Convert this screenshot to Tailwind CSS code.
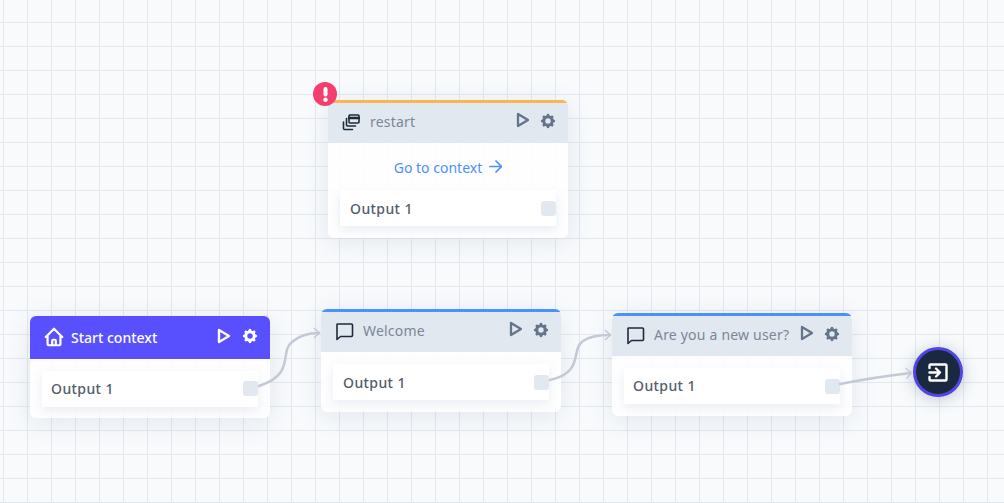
<!DOCTYPE html>
<html lang="en">
<head>
  <meta charset="UTF-8" />
  <title>Flow editor</title>
  <script src="https://cdn.jsdelivr.net/npm/@tailwindcss/browser@4"></script>
</head>
<body class="m-0 overflow-hidden">
  <!-- canvas: nodes sit on a free canvas so they are placed absolutely -->
  <div class="relative w-[1004px] h-[503px] overflow-hidden bg-[#f8fafc] bg-[image:linear-gradient(#e2e8f0_1px,transparent_1px),linear-gradient(90deg,#e2e8f0_1px,transparent_1px)] bg-[size:24px_24px] bg-[position:3px_22px] font-['Noto_Sans','Open_Sans',sans-serif]">

    <!-- restart -->
    <div class="absolute left-[328px] top-[100px] w-[240px] h-[138px] rounded-md bg-white/85 shadow-[0_4px_24px_rgba(100,116,139,0.14)] overflow-hidden">
      <div class="h-[43px] border-t-[3px] border-[#fbb64f] bg-[#e2e8f0] flex items-center pl-[14px] pr-[11px] pb-[4px]">
        <svg class="mt-[2px] w-[18px] h-[18px] text-[#1e293b]" viewBox="0 0 18 18" fill="none" stroke="currentColor" stroke-width="1.600" stroke-linecap="round" stroke-linejoin="round"><rect x="7" y="2" width="10" height="8" rx="1"/><path d="M7 5h10" stroke-width="2.400"/><path d="M4.500 5.500v6.500a1 1 0 001 1h8"/><path d="M1.500 9v6.500a1 1 0 001 1h8"/></svg>
        <span class="ml-[10px] mt-[1px] text-[14px] tracking-[0.2px] text-[#7b8798]">restart</span>
        <svg class="ml-auto mb-[2px] w-[12px] h-[14px] overflow-visible text-[#64748b]" viewBox="0 0 12 14" fill="none" stroke="currentColor" stroke-width="2.300" stroke-linejoin="round"><path d="M1 1l10 6-10 6z"/></svg>
        <svg class="ml-[10px] w-[18px] h-[18px] text-[#64748b]" viewBox="0 0 20 20" fill="currentColor"><path fill-rule="evenodd" clip-rule="evenodd" d="M11.49 3.17c-.38-1.56-2.6-1.56-2.98 0a1.532 1.532 0 01-2.286.948c-1.372-.836-2.942.734-2.106 2.106.54.886.061 2.042-.947 2.287-1.561.379-1.561 2.6 0 2.978a1.532 1.532 0 01.947 2.287c-.836 1.372.734 2.942 2.106 2.106a1.532 1.532 0 012.287.947c.379 1.561 2.6 1.561 2.978 0a1.533 1.533 0 012.287-.947c1.372.836 2.942-.734 2.106-2.106a1.533 1.533 0 01.947-2.287c1.561-.379 1.561-2.6 0-2.978a1.532 1.532 0 01-.947-2.287c.836-1.372-.734-2.942-2.106-2.106a1.532 1.532 0 01-2.287-.947zM10 13a3 3 0 100-6 3 3 0 000 6z"/></svg>
      </div>
      <div class="h-[47px] pt-[2px] flex items-center justify-center gap-[7px] text-[14px] text-[#4a90ff]">
        <span>Go to context</span>
        <svg class="mb-[3px] w-[13px] h-[13px]" viewBox="0 0 13 13" fill="none" stroke="currentColor" stroke-width="1.700" stroke-linecap="round" stroke-linejoin="round"><path d="M1 6.500h11M7 1l5.500 5.500L7 12"/></svg>
      </div>
      <div class="mx-[12px] h-[36px] bg-white shadow-[0_4px_10px_rgba(100,116,139,0.12)] flex items-center justify-between pl-[10px]">
        <span class="text-[14px] font-medium tracking-[0.4px] text-[#525c6b]">Output 1</span>
        <span class="w-[15px] h-[15px] rounded-[3px] bg-[#e2e8f0]"></span>
      </div>
    </div>
    <div class="absolute left-[313px] top-[82px] w-[24px] h-[24px] rounded-full bg-[#f43f6e] text-white flex items-center justify-center">
      <svg class="w-[5px] h-[15px]" viewBox="0 0 5 15" fill="currentColor"><rect x="0.500" y="0" width="4" height="9.500" rx="2"/><circle cx="2.500" cy="12.800" r="2.200"/></svg>
    </div>

    <!-- Start context -->
    <div class="absolute left-[30px] top-[316px] w-[240px] h-[102px] rounded-md bg-white/85 shadow-[0_4px_24px_rgba(100,116,139,0.14)] overflow-hidden">
      <div class="h-[43px] bg-[#5850ff] flex items-center pl-[13px] pr-[11px] pb-[3px]">
        <svg class="mt-[2px] w-[22px] h-[22px] text-white" viewBox="0 0 24 24" fill="none" stroke="currentColor" stroke-width="2.400" stroke-linecap="round" stroke-linejoin="round"><path d="M3 12l2-2m0 0l7-7 7 7M5 10v10a1 1 0 001 1h3m10-11l2 2m-2-2v10a1 1 0 01-1 1h-3m-6 0a1 1 0 001-1v-4a1 1 0 011-1h2a1 1 0 011 1v4a1 1 0 001 1m-6 0h6"/></svg>
        <span class="ml-[6px] mt-[3px] text-[14px] font-medium text-white">Start context</span>
        <svg class="ml-auto w-[12px] h-[14px] overflow-visible text-white" viewBox="0 0 12 14" fill="none" stroke="currentColor" stroke-width="2.400" stroke-linejoin="round"><path d="M1 1l10 6-10 6z"/></svg>
        <svg class="ml-[11px] w-[18px] h-[18px] text-white" viewBox="0 0 20 20" fill="currentColor"><path fill-rule="evenodd" clip-rule="evenodd" d="M11.49 3.17c-.38-1.56-2.6-1.56-2.98 0a1.532 1.532 0 01-2.286.948c-1.372-.836-2.942.734-2.106 2.106.54.886.061 2.042-.947 2.287-1.561.379-1.561 2.6 0 2.978a1.532 1.532 0 01.947 2.287c-.836 1.372.734 2.942 2.106 2.106a1.532 1.532 0 012.287.947c.379 1.561 2.6 1.561 2.978 0a1.533 1.533 0 012.287-.947c1.372.836 2.942-.734 2.106-2.106a1.533 1.533 0 01.947-2.287c1.561-.379 1.561-2.6 0-2.978a1.532 1.532 0 01-.947-2.287c.836-1.372-.734-2.942-2.106-2.106a1.532 1.532 0 01-2.287-.947zM10 13a3 3 0 100-6 3 3 0 000 6z"/></svg>
      </div>
      <div class="mt-[12px] mx-[12px] h-[36px] pb-[2px] bg-white shadow-[0_4px_10px_rgba(100,116,139,0.12)] flex items-center justify-between pl-[9px]">
        <span class="text-[14px] font-medium tracking-[0.4px] text-[#525c6b]">Output 1</span>
        <span class="w-[15px] h-[15px] rounded-[3px] bg-[#e2e8f0]"></span>
      </div>
    </div>

    <!-- Welcome -->
    <div class="absolute left-[321px] top-[309px] w-[240px] h-[103px] rounded-md bg-white/85 shadow-[0_4px_24px_rgba(100,116,139,0.14)] overflow-hidden">
      <div class="h-[43px] border-t-[3px] border-[#4a90ff] bg-[#e2e8f0] flex items-center pl-[14px] pr-[11px] pb-[4px]">
        <svg class="mt-[2px] w-[19px] h-[19px] text-[#1e293b]" viewBox="0 0 19 19" fill="none" stroke="currentColor" stroke-width="1.600" stroke-linejoin="round"><path d="M2.500 2h14a1 1 0 011 1v10.500a1 1 0 01-1 1H5.500l-3.500 3V2.500a.5.5 0 01.5-.5z"/></svg>
        <span class="ml-[9px] text-[14px] tracking-[0.2px] text-[#7b8798]">Welcome</span>
        <svg class="ml-auto mb-[2px] w-[12px] h-[14px] overflow-visible text-[#64748b]" viewBox="0 0 12 14" fill="none" stroke="currentColor" stroke-width="2.300" stroke-linejoin="round"><path d="M1 1l10 6-10 6z"/></svg>
        <svg class="ml-[10px] w-[18px] h-[18px] text-[#64748b]" viewBox="0 0 20 20" fill="currentColor"><path fill-rule="evenodd" clip-rule="evenodd" d="M11.49 3.17c-.38-1.56-2.6-1.56-2.98 0a1.532 1.532 0 01-2.286.948c-1.372-.836-2.942.734-2.106 2.106.54.886.061 2.042-.947 2.287-1.561.379-1.561 2.6 0 2.978a1.532 1.532 0 01.947 2.287c-.836 1.372.734 2.942 2.106 2.106a1.532 1.532 0 012.287.947c.379 1.561 2.6 1.561 2.978 0a1.533 1.533 0 012.287-.947c1.372.836 2.942-.734 2.106-2.106a1.533 1.533 0 01.947-2.287c1.561-.379 1.561-2.6 0-2.978a1.532 1.532 0 01-.947-2.287c.836-1.372-.734-2.942-2.106-2.106a1.532 1.532 0 01-2.287-.947zM10 13a3 3 0 100-6 3 3 0 000 6z"/></svg>
      </div>
      <div class="mt-[12px] mx-[12px] h-[36px] bg-white shadow-[0_4px_10px_rgba(100,116,139,0.12)] flex items-center justify-between pl-[10px]">
        <span class="text-[14px] font-medium tracking-[0.4px] text-[#525c6b]">Output 1</span>
        <span class="w-[15px] h-[15px] rounded-[3px] bg-[#e2e8f0]"></span>
      </div>
    </div>

    <!-- Are you a new user? -->
    <div class="absolute left-[612px] top-[313px] w-[240px] h-[103px] rounded-md bg-white/85 shadow-[0_4px_24px_rgba(100,116,139,0.14)] overflow-hidden">
      <div class="h-[43px] border-t-[3px] border-[#4a90ff] bg-[#e2e8f0] flex items-center pl-[14px] pr-[11px] pb-[4px]">
        <svg class="mt-[2px] w-[19px] h-[19px] text-[#1e293b]" viewBox="0 0 19 19" fill="none" stroke="currentColor" stroke-width="1.600" stroke-linejoin="round"><path d="M2.500 2h14a1 1 0 011 1v10.500a1 1 0 01-1 1H5.500l-3.500 3V2.500a.5.5 0 01.5-.5z"/></svg>
        <span class="ml-[9px] text-[14px] tracking-[0.2px] text-[#7b8798]">Are you a new user?</span>
        <svg class="ml-auto mb-[2px] w-[12px] h-[14px] overflow-visible text-[#64748b]" viewBox="0 0 12 14" fill="none" stroke="currentColor" stroke-width="2.300" stroke-linejoin="round"><path d="M1 1l10 6-10 6z"/></svg>
        <svg class="ml-[10px] w-[18px] h-[18px] text-[#64748b]" viewBox="0 0 20 20" fill="currentColor"><path fill-rule="evenodd" clip-rule="evenodd" d="M11.49 3.17c-.38-1.56-2.6-1.56-2.98 0a1.532 1.532 0 01-2.286.948c-1.372-.836-2.942.734-2.106 2.106.54.886.061 2.042-.947 2.287-1.561.379-1.561 2.6 0 2.978a1.532 1.532 0 01.947 2.287c-.836 1.372.734 2.942 2.106 2.106a1.532 1.532 0 012.287.947c.379 1.561 2.6 1.561 2.978 0a1.533 1.533 0 012.287-.947c1.372.836 2.942-.734 2.106-2.106a1.533 1.533 0 01.947-2.287c1.561-.379 1.561-2.6 0-2.978a1.532 1.532 0 01-.947-2.287c.836-1.372-.734-2.942-2.106-2.106a1.532 1.532 0 01-2.287-.947zM10 13a3 3 0 100-6 3 3 0 000 6z"/></svg>
      </div>
      <div class="mt-[12px] mx-[12px] h-[36px] bg-white shadow-[0_4px_10px_rgba(100,116,139,0.12)] flex items-center justify-between pl-[9px]">
        <span class="mb-[2px] text-[14px] font-medium tracking-[0.4px] text-[#525c6b]">Output 1</span>
        <span class="w-[15px] h-[15px] rounded-[3px] bg-[#e2e8f0]"></span>
      </div>
    </div>

    <!-- end node -->
    <div class="absolute left-[913px] top-[347px] w-[50px] h-[50px] rounded-full border-[3px] border-[#5046e8] bg-[#1a2940] shadow-[0_2px_16px_rgba(71,85,105,0.3)] flex items-center justify-center text-white">
      <svg class="w-[20px] h-[19px]" viewBox="0 0 20 19" fill="none" stroke="currentColor" stroke-width="2.400" stroke-linecap="round" stroke-linejoin="round"><path d="M1.500 5V2.500a1 1 0 011-1h15a1 1 0 011 1v14a1 1 0 01-1 1h-15a1 1 0 01-1-1V14"/><path d="M1.500 9.500h10M8 5.500l4 4-4 4"/></svg>
    </div>

    <!-- edges -->
    <svg class="absolute left-0 top-0 pointer-events-none" width="1004" height="503" fill="none" stroke="#c3c9d5" stroke-width="2.500" stroke-linecap="round" stroke-linejoin="round">
      <path d="M259 386C296 374 279 352 292 342C299 336 308 333 319 333"/>
      <path d="M314.500 328.500L319.500 333L314.500 337.500" stroke-width="1.500"/>
      <path d="M550 380C585 372 570 350 583 341C590 336 598 335 610 335"/>
      <path d="M605.500 330.500L610.500 335L605.500 339.500" stroke-width="1.500"/>
      <path d="M840 384C865 379 885 376 911 373"/>
      <path d="M906 368.500L911.500 373L907 378" stroke-width="1.500"/>
    </svg>
  </div>
</body>
</html>
